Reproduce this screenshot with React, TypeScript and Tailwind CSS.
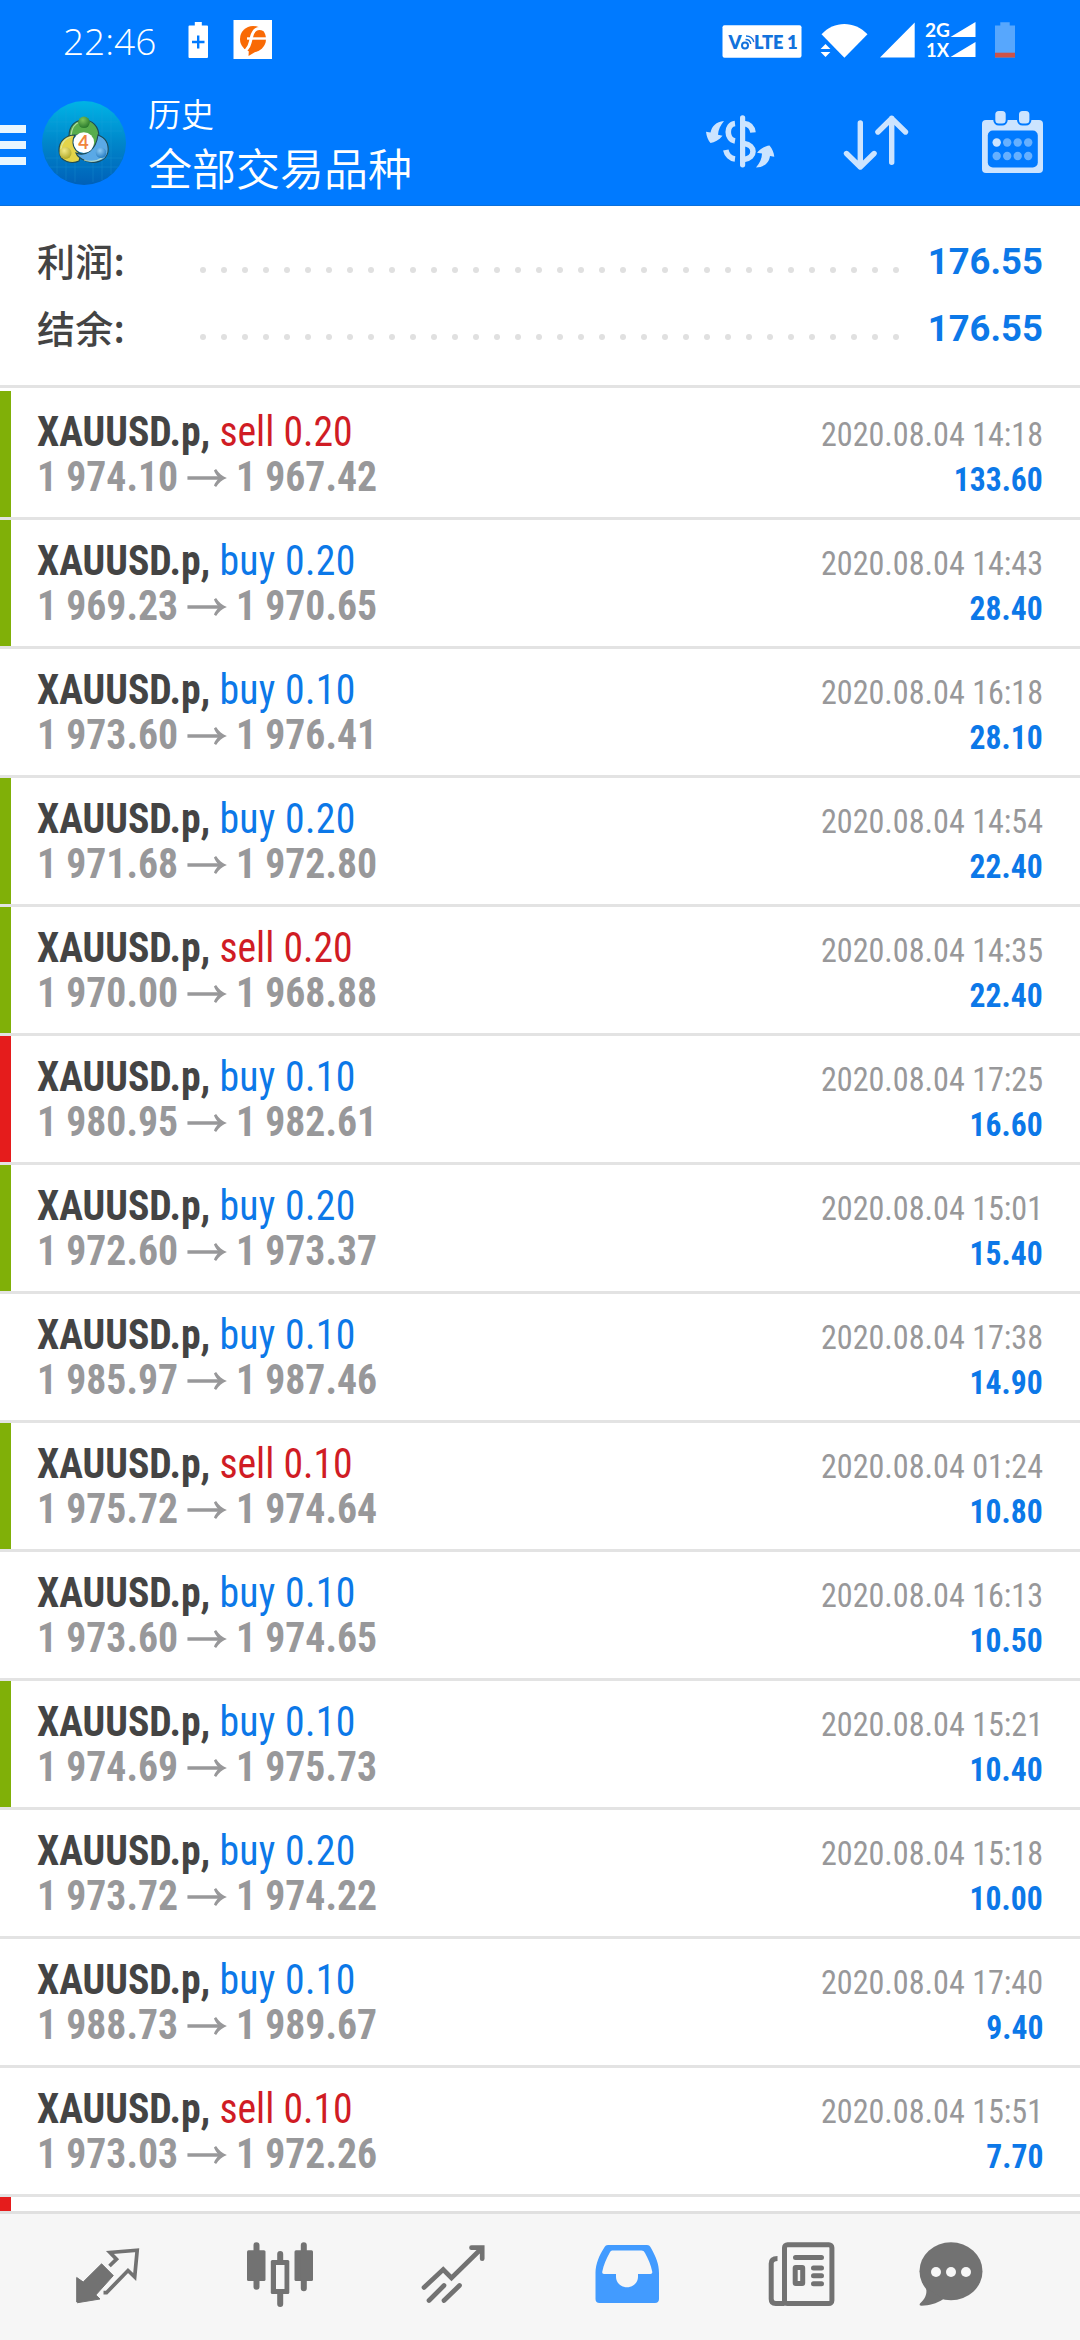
import * as React from "react";
import { clsx } from "clsx";

/* ─── Data ──────────────────────────────────────────── */
type Mark = "green" | "red" | null;

interface Deal {
  side: "buy" | "sell";
  volume: string;
  open: string;
  close: string;
  time: string;
  profit: string;
  mark: Mark;
}

const deals: Deal[] = [
  { side: "sell", volume: "0.20", open: "1 974.10", close: "1 967.42", time: "2020.08.04 14:18", profit: "133.60", mark: "green" },
  { side: "buy", volume: "0.20", open: "1 969.23", close: "1 970.65", time: "2020.08.04 14:43", profit: "28.40", mark: "green" },
  { side: "buy", volume: "0.10", open: "1 973.60", close: "1 976.41", time: "2020.08.04 16:18", profit: "28.10", mark: null },
  { side: "buy", volume: "0.20", open: "1 971.68", close: "1 972.80", time: "2020.08.04 14:54", profit: "22.40", mark: "green" },
  { side: "sell", volume: "0.20", open: "1 970.00", close: "1 968.88", time: "2020.08.04 14:35", profit: "22.40", mark: "green" },
  { side: "buy", volume: "0.10", open: "1 980.95", close: "1 982.61", time: "2020.08.04 17:25", profit: "16.60", mark: "red" },
  { side: "buy", volume: "0.20", open: "1 972.60", close: "1 973.37", time: "2020.08.04 15:01", profit: "15.40", mark: "green" },
  { side: "buy", volume: "0.10", open: "1 985.97", close: "1 987.46", time: "2020.08.04 17:38", profit: "14.90", mark: null },
  { side: "sell", volume: "0.10", open: "1 975.72", close: "1 974.64", time: "2020.08.04 01:24", profit: "10.80", mark: "green" },
  { side: "buy", volume: "0.10", open: "1 973.60", close: "1 974.65", time: "2020.08.04 16:13", profit: "10.50", mark: null },
  { side: "buy", volume: "0.10", open: "1 974.69", close: "1 975.73", time: "2020.08.04 15:21", profit: "10.40", mark: "green" },
  { side: "buy", volume: "0.20", open: "1 973.72", close: "1 974.22", time: "2020.08.04 15:18", profit: "10.00", mark: null },
  { side: "buy", volume: "0.10", open: "1 988.73", close: "1 989.67", time: "2020.08.04 17:40", profit: "9.40", mark: null },
  { side: "sell", volume: "0.10", open: "1 973.03", close: "1 972.26", time: "2020.08.04 15:51", profit: "7.70", mark: null },
];

/* ─── Status bar ────────────────────────────────────── */
function StatusBar() {
  return (
    <div className="flex h-20 items-center pl-[63px]">
      <span className="w-[125px] font-['Open_Sans','Noto_Sans',sans-serif] text-[37px] font-[350] leading-none">
        22:46
      </span>
      <svg className="h-20 w-[90px]" viewBox="188 0 90 80">
        <path fill="#fff" d="M189.500 25.500h5.300v-3.500h7v3.500h5.200a1 1 0 0 1 1 1V57a1 1 0 0 1-1 1h-17.500a1 1 0 0 1-1-1V26.500a1 1 0 0 1 1-1z" />
        <path stroke="#007aff" strokeWidth="2.400" d="M192 42h12.500M198.200 35.500v13" />
        <rect x="233.500" y="20" width="38.500" height="39" fill="#fff" />
        <circle cx="253" cy="39" r="13" fill="#f96a05" />
        <path fill="#f96a05" d="M249 48l-.5 8 10-6z" />
        <path fill="none" stroke="#fff" strokeWidth="3" d="M264 29.500c-7-2.500-10.500 0-12.500 7.500-1.700 8-3 12-8 15" />
        <path stroke="#fff" strokeWidth="2.400" d="M247 38.500h19" />
      </svg>

      <div className="ml-auto flex items-center">
        {/* VoLTE badge */}
        <svg className="h-20 w-[98px]" viewBox="722 0 98 80">
          <rect x="722.500" y="25.300" width="79" height="32.500" rx="2" fill="#fff" />
          <g fill="#1272dc" fontFamily="Lato, sans-serif" fontWeight="800" fontSize="18.500">
            <text x="728.500" y="49">V</text>
            <text x="754" y="49" textLength="29.500" lengthAdjust="spacingAndGlyphs">LTE</text>
            <text x="787" y="49">1</text>
          </g>
          <circle cx="745" cy="45.500" r="3" fill="none" stroke="#1272dc" strokeWidth="2" />
          <path fill="none" stroke="#1272dc" strokeWidth="1.400" d="M745.500 39.500c3 0 5 2 5.300 4.500M746 36c4 0 7 2.500 7.800 6" />
        </svg>
        {/* Wi-Fi */}
        <svg className="h-20 w-[60px]" viewBox="820 0 60 80" fill="#fff">
          <path d="M821.500 34.300C834 20.500 854.500 20.500 867.500 34.300L844.400 57.700z" />
          <path d="M820.600 49h9.800l-4.900-5zM820.600 52h9.800l-4.900 5z" />
        </svg>
        {/* Mobile signal */}
        <svg className="h-20 w-[114px]" viewBox="880 0 114 80" fill="#fff">
          <path d="M880 57.500h34.700V22.500zM950.500 37h25V22zM950.500 57h25V42z" />
          <g fontFamily="Lato, sans-serif" fontWeight="700" fontSize="18">
            <text x="925" y="37.300" textLength="25" lengthAdjust="spacingAndGlyphs">2G</text>
            <text x="926" y="57.300" textLength="23" lengthAdjust="spacingAndGlyphs">1X</text>
          </g>
        </svg>
        {/* Battery */}
        <svg className="h-20 w-[86px]" viewBox="994 0 86 80">
          <path fill="#57a7fd" d="M995 25.500h5.300v-3.300h9.400v3.300h5.300v32h-20z" />
          <path fill="#cf5347" d="M995 52.700h20v4.800h-20z" />
        </svg>
      </div>
    </div>
  );
}

/* ─── App bar ───────────────────────────────────────── */
function AppLogo() {
  return (
    <svg className="h-[90px] w-[90px]" viewBox="39 98 90 90">
      <defs>
        <linearGradient id="disc" x1="0" y1="0" x2="0" y2="1">
          <stop offset="0" stopColor="#00b4e6" />
          <stop offset="0.5" stopColor="#0086ca" />
          <stop offset="1" stopColor="#0060b8" />
        </linearGradient>
        <radialGradient id="gold" cx="0.4" cy="0.3" r="0.8">
          <stop offset="0" stopColor="#f3ea86" />
          <stop offset="1" stopColor="#a8a01e" />
        </radialGradient>
        <radialGradient id="leaf" cx="0.4" cy="0.3" r="0.8">
          <stop offset="0" stopColor="#7cc45c" />
          <stop offset="1" stopColor="#1d6f25" />
        </radialGradient>
        <radialGradient id="sky" cx="0.4" cy="0.3" r="0.8">
          <stop offset="0" stopColor="#8ecbf5" />
          <stop offset="1" stopColor="#1872bd" />
        </radialGradient>
      </defs>
      <circle cx="84" cy="143" r="42" fill="url(#disc)" />
      <path stroke="#27a3dd" strokeWidth="0.700" opacity="0.350" d="M57 112v62M66 108v72M75 104v78M93 104v78M102 108v72M111 112v62M50 122h68M46 131h76M46 158h76M50 167h68" />
      <g stroke="#1d4a55" strokeWidth="1.100">
        <path fill="#58ad4c" d="M69 136c0-11 7-16 15-16s15 6 15 17c0 5-2 8-5 10l-8-12h-9l-5 3z" />
        <path fill="#e3d44a" d="M59 150c0-9 7-15 16-15-4 7-2 15 6 19l-2 7c-6 3-20 2-20-11z" />
        <path fill="#5aa9e6" d="M98 135c8 3 11 9 10 17-2 10-14 12-22 9-5-2-9-5-10-8 10 4 20-3 22-18z" />
      </g>
      <path fill="none" stroke="#d6efc4" strokeWidth="1.200" opacity="0.700" d="M71 135c1-8 5-12 9-13M61 149c1-7 5-11 10-12M84 160c8 3 19 1 22-8" />
      <circle cx="84" cy="122.300" r="5.800" fill="url(#leaf)" />
      <circle cx="65.500" cy="153" r="6" fill="url(#gold)" />
      <circle cx="101" cy="152.800" r="5.300" fill="url(#sky)" />
      <circle cx="83.800" cy="142.600" r="10.300" fill="#fff" />
      <text x="83.500" y="149" textAnchor="middle" fontFamily="Lato, sans-serif" fontSize="18" fontWeight="700" fill="#f0853c">4</text>
    </svg>
  );
}

function AppBar() {
  return (
    <div className="flex h-[126px]">
      <div className="flex w-[26px] flex-col gap-[8.500px] pt-[45px]">
        <span className="h-[7.500px] bg-[#e8f6ff]" />
        <span className="h-[7.500px] bg-[#e8f6ff]" />
        <span className="h-[7.500px] bg-[#e8f6ff]" />
      </div>
      <div className="ml-[13px] pt-[18px]">
        <AppLogo />
      </div>
      <div className="ml-[19px] flex flex-col font-['Noto_Sans_CJK_SC',sans-serif] font-[350]">
        <span className="mt-[11px] text-[33px] leading-[44px]">历史</span>
        <span className="text-[44px] leading-[64px]">全部交易品种</span>
      </div>
      <div className="ml-auto flex">
        {/* Currency swap */}
        <svg className="h-[126px] w-[140px]" viewBox="700 80 140 126">
          <g fill="none" stroke="#cce4ff" strokeWidth="5.600">
            <path strokeLinecap="round" strokeWidth="5.200" d="M742.600 117.800v47" />
            <path d="M735 123.500c-9 1-9 16 0 17.500M725.800 150c1 5 5 8.500 9.200 9" />
            <path d="M744 123.500c5 .5 8.300 3.500 9 9M744 143.500c12 1.500 12 14.500 0 16" />
          </g>
          <path fill="#cce4ff" d="M724 121c-8 1-12 5-13.500 11.500l-4.500-.7c.5 4.500 2 8.500 4.500 11.200 4-.5 8.500-3 12-7.300l-4.500-1c.3-5 2.500-9.500 6-13.700z" />
          <path fill="#cce4ff" d="M756 167.500c9-.5 13-5 14-11.500l4.300.7c-.5-4.200-2-8.200-4.800-11.200-4.200.5-9 3-12.500 7.200l5 .8c0 5-2.500 10-6 14z" />
        </svg>
        {/* Sort */}
        <svg className="h-[126px] w-[130px]" viewBox="840 80 130 126">
          <path fill="none" stroke="#cce4ff" strokeWidth="5.400" strokeLinecap="round" strokeLinejoin="round" d="M860.300 123v44M846.500 153.500l13.800 13.500 13.800-13.500M891.700 162.300v-44M877.900 132l13.800-13.500 13.800 13.500" />
        </svg>
        {/* Calendar */}
        <svg className="h-[126px] w-[110px]" viewBox="970 80 110 126">
          <rect x="982" y="120" width="61" height="53" rx="4" fill="#cce4ff" />
          <rect x="987.800" y="130.500" width="50" height="37" rx="5" fill="#007aff" />
          <g fill="#cce4ff" stroke="#007aff" strokeWidth="2">
            <rect x="994.300" y="110" width="12.400" height="14.500" rx="4.500" />
            <rect x="1018" y="110" width="12.400" height="14.500" rx="4.500" />
          </g>
          <circle cx="996.700" cy="142.500" r="4.200" fill="#cce4ff" />
          <g fill="#66b0ff">
            <circle cx="1007.200" cy="142.500" r="4.200" />
            <circle cx="1017.700" cy="142.500" r="4.200" />
            <circle cx="1028.200" cy="142.500" r="4.200" />
            <circle cx="996.700" cy="156" r="4.200" />
            <circle cx="1007.200" cy="156" r="4.200" />
            <circle cx="1017.700" cy="156" r="4.200" />
            <circle cx="1028.200" cy="156" r="4.200" />
          </g>
        </svg>
      </div>
    </div>
  );
}

/* ─── Summary ───────────────────────────────────────── */
function SummaryLine({ label, value }: { label: string; value: string }) {
  return (
    <div className="flex h-[67px] items-center">
      <span className="w-[163px] pb-[3px] font-['Noto_Sans_CJK_SC',sans-serif] text-[38px] font-medium leading-[60px] tracking-[0.300px] text-[#444]">
        {label}
      </span>
      <span className="flex w-[699px] justify-between pt-4">
        {Array.from({ length: 34 }, (_, i) => (
          <span key={i} className="h-[6px] w-[6px] rounded-full bg-[#e0e0e0]" />
        ))}
      </span>
      <span className="ml-auto origin-right scale-x-[0.985] pt-px font-[Roboto] text-[37px] font-bold text-[#0c78e8]">
        {value}
      </span>
    </div>
  );
}

/* ─── Deal row ──────────────────────────────────────── */
function PriceArrow() {
  return (
    <svg className="inline-block h-[20px] w-[42px] align-[3px]" viewBox="0 0 42 20">
      <path fill="none" stroke="#98989a" strokeWidth="3.600" d="M0 10h38" />
      <path fill="#98989a" d="M42 10c-5 1.800-8.500 4.500-11.500 9l-2.300-1.500c1.500-3 3.200-5.500 5.800-7.500-2.600-2-4.300-4.500-5.800-7.500L30.500 1c3 4.500 6.500 7.200 11.500 9z" />
    </svg>
  );
}

function DealRow({ deal }: { deal: Deal }) {
  return (
    <li className="flex h-[129px] border-b-[3px] border-[#e3e3e3] font-['Roboto_Condensed',Roboto,sans-serif] [font-stretch:75%]">
      <span
        className={clsx(
          "w-[11px]",
          deal.mark === "green" && "bg-[#80b008]",
          deal.mark === "red" && "bg-[#e51c1c]"
        )}
      />
      <div className="flex flex-1 justify-between pl-[26px] pr-[37px] pt-[18px]">
        <div className="origin-left scale-x-[0.945] text-[42px] leading-[45px]">
          <div className="whitespace-nowrap">
            <span className="font-bold text-[#444]">XAUUSD.p,</span>{" "}
            <span
              className={clsx(
                deal.side === "sell" ? "text-[#d01c24]" : "tracking-[0.350px] text-[#0c78e8]"
              )}
            >
              {deal.side} {deal.volume}
            </span>
          </div>
          <div className="whitespace-nowrap font-bold text-[#98989a]">
            {deal.open} <PriceArrow /> {deal.close}
          </div>
        </div>
        <div className="flex flex-col items-end pt-[3px] text-[34px] leading-[45px]">
          <span className="origin-right scale-x-[0.945] text-[#98989a]">{deal.time}</span>
          <span className="origin-right scale-x-[0.930] font-bold text-[#0c78e8]">{deal.profit}</span>
        </div>
      </div>
    </li>
  );
}

/* ─── Bottom navigation ─────────────────────────────── */
function BottomNav() {
  return (
    <nav className="grid h-[129px] grid-cols-6 border-t-[3px] border-[#e0e0e0] bg-[#f6f6f6]">
      {/* Quotes */}
      <svg className="h-[126px] w-[180px]" viewBox="0 2214 180 126">
        <path fill="#727272" stroke="#727272" strokeLinejoin="round" d="M76.700 2277.500l6.500 4.500 18.400-18.200 11.700 11.800-17.500 19.400 4.200 4-22.500 3.700-.8-.7z" />
        <path fill="none" stroke="#727272" strokeWidth="3.700" d="M109.500 2266l7-6.800-6.500-6.700 27.200-2.300-2.500 26.800-6.700-6.500-21.500 22.200h-3" />
      </svg>
      {/* Chart */}
      <svg className="h-[126px] w-[180px]" viewBox="180 2214 180 126">
        <g fill="#727272">
          <rect x="247" y="2250.300" width="18.500" height="30.700" rx="1.500" />
          <rect x="294.500" y="2250.300" width="18.500" height="30.700" rx="1.500" />
          <rect x="270.800" y="2260" width="18.500" height="34" rx="1.500" />
        </g>
        <path fill="#f6f6f6" d="M276 2265h8.500v24H276z" />
        <path stroke="#727272" strokeWidth="6" strokeLinecap="round" d="M256.500 2245.300v41.500M303.800 2245.300v43M280.200 2254v8M280.200 2292v12" />
      </svg>
      {/* Trade */}
      <svg className="h-[126px] w-[180px]" viewBox="360 2214 180 126">
        <path fill="none" stroke="#727272" strokeWidth="4.700" strokeLinecap="round" d="M424 2287.500l19.200-18 8.300 8.500 30.500-30M471.500 2247.700h10.700v11M429 2300.500l15-15M444 2300.500l15.500-15" />
      </svg>
      {/* History */}
      <svg className="h-[126px] w-[180px]" viewBox="540 2214 180 126">
        <path fill="#429bff" fillRule="evenodd" d="M608 2245h39c2 0 3 1 4 3 5 9 8 16 8 25v26c0 2.500-1.500 4-4 4h-55.500c-2.500 0-4-1.500-4-4v-26c0-9 4-18 8.500-25 1-2 2-3 4-3zM613 2250.500c-1.500 0-2.500.5-3.200 2-3.500 6.500-6.300 12.500-7.500 19-.3 1.700.3 2.500 1.700 2.500h12v3c0 5.500 5 10.300 11 10.300s11-4.800 11-10.300v-3h12.500c1.400 0 2-.8 1.700-2.500-1.200-6.500-4-12.500-7.200-18.500-.8-1.700-2-2.500-3.500-2.500z" />
      </svg>
      {/* News */}
      <svg className="h-[126px] w-[180px]" viewBox="720 2214 180 126">
        <g fill="none" stroke="#727272" strokeWidth="5">
          <rect x="784.500" y="2244.700" width="47.400" height="58.800" rx="3" />
          <path d="M777.500 2258.500c-4 0-6.300 1.500-6.300 5v35.500c0 3 1.500 4.500 4.500 4.500h9" />
          <path strokeLinecap="round" d="M795.500 2257.500h26M813.500 2268h8M813.500 2275.800h8M813.500 2283.700h8" />
          <rect x="795.200" y="2267.500" width="7.500" height="16" rx="0.500" />
        </g>
      </svg>
      {/* Messages */}
      <svg className="h-[126px] w-[180px]" viewBox="900 2214 180 126">
        <ellipse cx="951" cy="2271.200" rx="31.500" ry="29" fill="#727272" />
        <path fill="#727272" d="M926 2288c1.500 6-1 11-6 15.500-1 1.500 0 2.200 1.500 2.200 8 0 14.500-2 22-6.700z" />
        <g fill="#f6f6f6">
          <circle cx="936" cy="2272" r="5" />
          <circle cx="951" cy="2272" r="5" />
          <circle cx="966" cy="2272" r="5" />
        </g>
      </svg>
    </nav>
  );
}

export default function App() {
  return (
    <div className="flex h-[2340px] w-[1080px] flex-col overflow-hidden bg-white">
      <header className="h-[206px] shrink-0 border-b border-[#0a70dc] bg-[#007aff] text-white">
        <StatusBar />
        <AppBar />
      </header>

      <section className="mb-[3px] h-[182px] shrink-0 border-b-[3px] border-[#e3e3e3] pl-[37px] pr-[37px] pt-[22px]">
        <SummaryLine label="利润:" value="176.55" />
        <SummaryLine label="结余:" value="176.55" />
      </section>

      <ul className="shrink-0">
        {deals.map((deal) => (
          <DealRow key={deal.time} deal={deal} />
        ))}
      </ul>

      {/* Next row, cut off by the navigation */}
      <div className="h-[14px] w-[11px] shrink-0 bg-[#e51c1c]" />

      <BottomNav />
    </div>
  );
}
